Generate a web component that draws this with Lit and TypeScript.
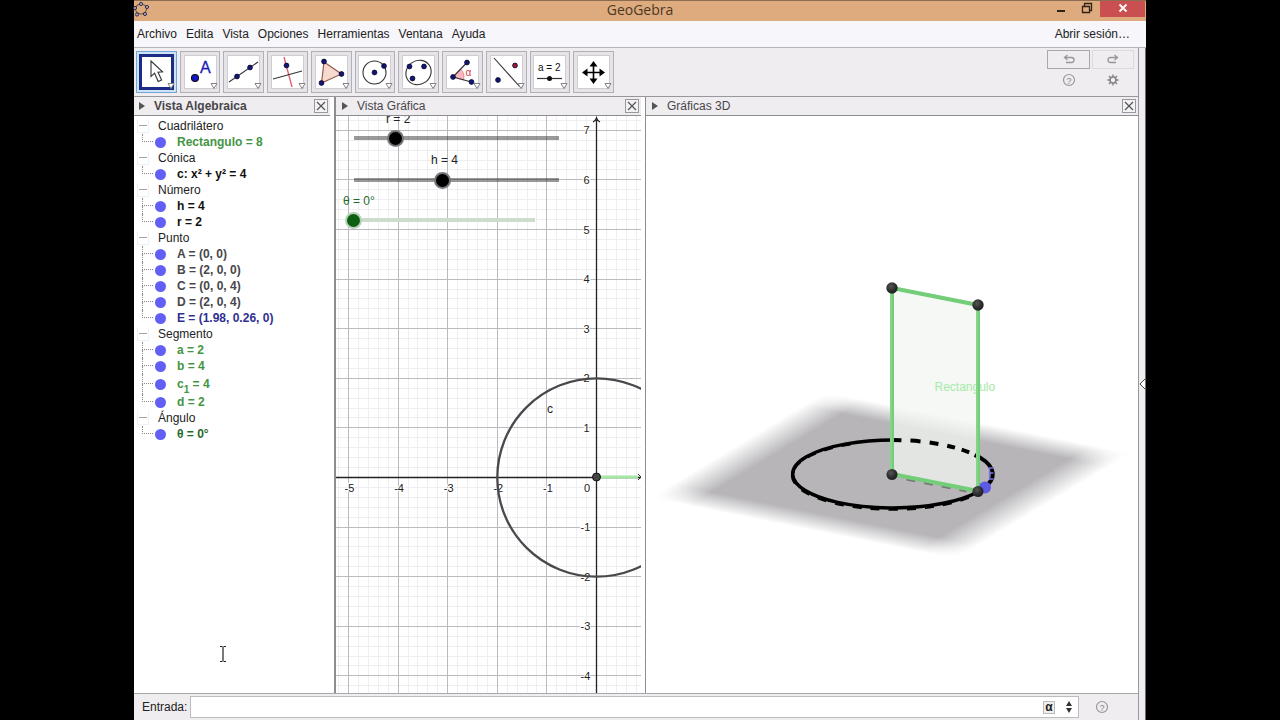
import { LitElement, html, svg, css } from "lit";
import { customElement, property } from "lit/decorators.js";

interface Item { text: string; sub?: string; rest?: string; tone: string; }
interface Group { name: string; items: Item[]; }

const GROUPS: Group[] = [
  { name: "Cuadrilátero", items: [{ text: "Rectangulo = 8", tone: "green" }] },
  { name: "Cónica", items: [{ text: "c: x² + y² = 4", tone: "black" }] },
  { name: "Número", items: [{ text: "h = 4", tone: "black" }, { text: "r = 2", tone: "black" }] },
  {
    name: "Punto",
    items: [
      { text: "A = (0, 0)", tone: "gray" },
      { text: "B = (2, 0, 0)", tone: "gray" },
      { text: "C = (0, 0, 4)", tone: "gray" },
      { text: "D = (2, 0, 4)", tone: "gray" },
      { text: "E = (1.98, 0.26, 0)", tone: "blue" },
    ],
  },
  {
    name: "Segmento",
    items: [
      { text: "a = 2", tone: "green" },
      { text: "b = 4", tone: "green" },
      { text: "c", sub: "1", rest: " = 4", tone: "green" },
      { text: "d = 2", tone: "green" },
    ],
  },
  { name: "Ángulo", items: [{ text: "θ = 0°", tone: "dark" }] },
];

const dot = (x: number, y: number, fill = "#16166e") =>
  svg`<circle cx=${x} cy=${y} r="2.400" fill=${fill} stroke="#000033" stroke-width=".8"/>`;

const TOOLS = [
  { label: "Elige y mueve", art: svg`<path d="M11 6V21.500L14.600 18.200L18.200 26.500L21.600 25L18 17.200L22.600 16.800Z" fill="#fff" stroke="#333" stroke-width="1.100"/>` },
  { label: "Punto", art: svg`<circle cx="11" cy="22" r="3.500" fill="#1414c8" stroke="#111" stroke-width="1.100"/><text x="16" y="17" font-size="16" fill="#1a1ab4" stroke="#1a1ab4" stroke-width=".3">A</text>` },
  { label: "Recta", art: svg`<path d="M2 26L31 6" stroke="#333" stroke-width="1.100"/>${dot(10, 20.5)}${dot(23, 11.5)}` },
  { label: "Perpendicular", art: svg`<path d="M13 1L21 31" stroke="#e05a68" stroke-width="1.300"/><path d="M2 23L31 15" stroke="#333" stroke-width="1.100"/>${dot(15.5, 9.5)}` },
  { label: "Polígono", art: svg`<path d="M9 6L26.500 18L6.500 27Z" fill="#f6d9cf" stroke="#9a5a48" stroke-width="1.200"/>${dot(9, 5.5)}${dot(26.5, 18)}${dot(6.5, 27)}` },
  { label: "Circunferencia", art: svg`<circle cx="16.500" cy="16.500" r="11.500" fill="none" stroke="#333" stroke-width="1.100"/>${dot(16.5, 16.5)}${dot(26, 10)}` },
  { label: "Elipse", art: svg`<ellipse cx="16.500" cy="16.500" rx="13" ry="11.800" transform="rotate(-35 16.500 16.500)" fill="none" stroke="#333" stroke-width="1.100"/>${dot(7.5, 10.5)}${dot(22, 10.5)}${dot(10.5, 22.5)}` },
  { label: "Ángulo", art: svg`<path d="M7 21L14.500 13A11 11 0 0 1 17.500 24Z" fill="#f9b8be" stroke="#e07884" stroke-width=".8"/><path d="M7 21L21 6.500M7 21L25.500 26" stroke="#333" stroke-width="1.100"/>${dot(7, 21)}${dot(21, 6.5)}${dot(25.5, 26)}<text x="19.500" y="19.500" font-size="10" fill="#d83c3c">α</text>` },
  { label: "Simetría", art: svg`<path d="M4 2L30 31" stroke="#333" stroke-width="1.100"/>${dot(8, 24)}${dot(25, 9.5, "#a01830")}` },
  { label: "Deslizador", art: svg`<text x="5" y="15" font-size="10" fill="#111">a = 2</text><path d="M4 22.500H29" stroke="#333" stroke-width="1.200"/><circle cx="16.500" cy="22.500" r="2.500" fill="#111"/>` },
  { label: "Desplaza vista", art: svg`<path d="M8 16.500H25M16.500 8V25" stroke="#000" stroke-width="1.600"/><path d="M16.500 5L20.500 10.500H12.500ZM16.500 28L20.500 22.500H12.500ZM5 16.500L10.500 12.500V20.500ZM28 16.500L22.500 12.500V20.500Z" fill="#000"/>` },
];

const base = css`
  * { box-sizing: border-box; }
  button { padding: 0; border: 0; background: none; font: inherit; color: inherit; }
  svg { display: block; }
`;

@customElement("view-header")
class ViewHeader extends LitElement {
  @property() label = "";
  @property({ type: Boolean }) active = false;

  static styles = [base, css`
    :host { display: block; background: #efedf0; border-bottom: 1px solid #8e8c90; }
    .bar { display: flex; align-items: center; height: 18px; padding: 0 2px 0 5px; color: #48464a; font-size: 12px; }
    .title { flex: 1; margin: 0 0 0 7px; font-size: 12px; font-weight: 400; }
    .strong { font-weight: 700; }
    .close { width: 14px; height: 14px; border: 1px solid #9a989c; background: #f3f2f4; }
  `];

  render() {
    return html`<div class="bar">
      <button aria-label="Estilo"><svg width="8" height="10"><path d="M0 1L6 5L0 9Z" fill="#555"/></svg></button>
      <h2 class="title ${this.active ? "strong" : ""}">${this.label}</h2>
      <button class="close" aria-label="Cerrar"><svg width="12" height="12"><path d="M2 2L10 10M10 2L2 10" stroke="#555" stroke-width="1.200"/></svg></button>
    </div>`;
  }
}

@customElement("algebra-view")
class AlgebraView extends LitElement {
  static styles = [base, css`
    :host { display: block; }
    .tree { padding: 2px 0 0 3px; font-size: 12px; line-height: 16px; }
    .head { display: flex; align-items: center; height: 16px; margin: 0; font-size: 12px; font-weight: 400; color: #222; }
    .toggle { width: 12px; height: 14px; margin-right: 9px; border: 1px solid #f0eff2; border-top: 0; }
    .minus { display: block; width: 8px; height: 1px; margin-left: 1px; background: #a5a3a8; }
    .list { list-style: none; margin: 0; padding: 0 0 0 5px; }
    .item { display: flex; align-items: center; height: 16px; font-weight: 700; }
    .tall { height: 20px; }
    .branch { display: grid; grid-template-rows: 1fr 1fr; align-self: stretch; width: 11px; }
    .upper { border-left: 1px dotted #8a888c; border-bottom: 1px dotted #8a888c; }
    .lower { border-left: 1px dotted #8a888c; }
    .item:last-child .lower { border-left: 0; }
    .mark { width: 11px; height: 11px; margin: 0 11px 0 2px; border-radius: 50%; background: #625ff6; }
    .sub { font-size: 10px; line-height: 1px; vertical-align: -5px; }
    .green { color: #439543; }
    .black { color: #111; }
    .gray { color: #48464a; }
    .blue { color: #302f93; }
    .dark { color: #1f6a2a; }
  `];

  render() {
    return html`<div class="tree">${GROUPS.map((g) => html`
      <h3 class="head"><button class="toggle" aria-label="Contraer ${g.name}"><span class="minus"></span></button>${g.name}</h3>
      <ul class="list">${g.items.map((i) => html`
        <li class="item ${i.sub ? "tall" : ""}">
          <span class="branch"><span class="upper"></span><span class="lower"></span></span>
          <button class="mark" aria-label="Mostrar u ocultar"></button>
          <span class=${i.tone}>${i.text}${i.sub ? html`<span class="sub">${i.sub}</span>${i.rest}` : ""}</span>
        </li>`)}
      </ul>`)}</div>`;
  }
}

@customElement("graph-view")
class GraphView extends LitElement {
  static styles = [base, css`
    :host { display: block; position: relative; overflow: hidden; margin-right: 4px; font-size: 12px; }
    .plot { position: absolute; inset: 0; width: 100%; height: 100%; }
    .num { font-size: 11px; fill: #222; text-anchor: middle; stroke: #fff; stroke-width: 2px; paint-order: stroke; }
    .slider { position: absolute; }
    .name { position: absolute; white-space: nowrap; line-height: 14px; color: #222; }
    .range {
      display: block; appearance: none; margin: 0; width: 219px; height: 18px;
      background: linear-gradient(#00000066, #00000066) center / calc(100% - 14px) 4px no-repeat;
    }
    .range::-webkit-slider-thumb {
      appearance: none; width: 17px; height: 17px; border-radius: 50%;
      background: #000; border: 2px solid #777578;
    }
    .theta .range { width: 197px; background-image: linear-gradient(#cddccd, #cddccd); }
    .theta .range::-webkit-slider-thumb { background: #0d5f12; border-color: #b9cfb9; }
    .theta .name { color: #1f6a2a; left: -2px; top: -17px; }
    .r { left: 11px; top: 13px; }
    .r .name { left: 39px; top: -17px; }
    .h { left: 11px; top: 55px; }
    .h .name { left: 84px; top: -18px; }
    .theta { left: 9px; top: 95px; }
  `];

  render() {
    const u = 49.6, ox = 260.5, oy = 361.5;
    const minor = [], major = [], labels = [];
    for (let i = -26; i <= 60; i++) {
      const p = i * u / 5;
      const list = i % 5 ? minor : major;
      const color = i % 5 ? "#efeef2" : "#bcbabe";
      list.push(svg`<path d="M${Math.round(ox + p - 0.5) + 0.5} 0V2000M0 ${Math.round(oy + p - 0.5) + 0.5}H2000" stroke=${color}/>`);
    }
    for (let i = 27; i < 40; i++) {
      const color = i % 5 ? "#efeef2" : "#bcbabe";
      (i % 5 ? minor : major).push(svg`<path d="M0 ${Math.round(oy - i * u / 5 - 0.5) + 0.5}H2000" stroke=${color}/>`);
    }
    for (let x = -5; x < 0; x++) labels.push(svg`<text class="num" x=${ox + x * u + 1} y=${oy + 14}>${x}</text>`);
    for (let y = -4; y <= 7; y++) if (y) labels.push(svg`<text class="num" x=${ox - (y < 0 ? 11 : 10)} y=${oy - y * u + 4}>${y}</text>`);
    return html`
      <svg class="plot" role="img" aria-label="Plano cartesiano">
        ${minor}${major}
        <path d="M0 361.500H400M260.500 4V2000M257 6Q259.500 5 260.500 2Q261.500 5 264 6" fill="none" stroke="#222" stroke-width="1.300"/>
        ${labels}
        <text class="num" x="251" y="375.500">0</text>
        <circle cx=${ox} cy=${oy} r=${2 * u} fill="none" stroke="#4a484b" stroke-width="2.300"/>
        <text x="211" y="297" font-size="12" fill="#222">c</text>
        <path d="M260 361H302" stroke="#a5e8a5" stroke-width="3"/>
        <path d="M302 358L305 361L302 364" fill="none" stroke="#333"/>
        <circle cx="260.500" cy="361" r="4" fill="#444" stroke="#111"/>
      </svg>
      <div class="slider r"><label class="name" for="r">r = 2</label><input class="range" id="r" type="range" min="0" max="10" value="2"></div>
      <div class="slider h"><label class="name" for="h">h = 4</label><input class="range" id="h" type="range" min="1" max="8" value="4"></div>
      <div class="slider theta"><label class="name" for="t">θ = 0°</label><input class="range" id="t" type="range" min="0" max="360" value="0"></div>`;
  }
}

@customElement("space-view")
class SpaceView extends LitElement {
  static styles = [base, css`
    :host { display: block; overflow: hidden; }
    .scene { width: 100%; height: 100%; }
  `];

  render() {
    return html`<svg class="scene" viewBox="646 116 491 577" role="img" aria-label="Vista 3D">
      <defs>
        <linearGradient id="fx"><stop offset="0" stop-color="#b7b5b8" stop-opacity="0"/><stop offset=".13" stop-color="#b7b5b8"/><stop offset=".87" stop-color="#b7b5b8"/><stop offset="1" stop-color="#b7b5b8" stop-opacity="0"/></linearGradient>
        <linearGradient id="fy" x2="0" y2="1"><stop offset="0" stop-color="#000"/><stop offset=".13" stop-color="#fff"/><stop offset=".87" stop-color="#fff"/><stop offset="1" stop-color="#000"/></linearGradient>
        <mask id="fade" maskUnits="userSpaceOnUse" x="0" y="0" width="100" height="100"><rect width="100" height="100" fill="url(#fy)"/></mask>
        <radialGradient id="ball" cx=".4" cy=".35"><stop offset="0" stop-color="#555"/><stop offset="1" stop-color="#262628"/></radialGradient>
      </defs>
      <g transform="matrix(3.060 .61 1.760 -1.060 649 498)"><rect width="100" height="100" fill="url(#fx)" mask="url(#fade)"/></g>
      <path d="M892 440A100 34 0 1 0 977 492" fill="none" stroke="#000" stroke-width="3.500"/>
      <path d="M792 475A100 34 0 0 0 977 493" fill="none" stroke="#000" stroke-width="3.500" stroke-dasharray="9 9"/>
      <path d="M850 444A100 34 0 0 0 792 475" fill="none" stroke="#000" stroke-width="3" stroke-dasharray="9 9"/>
      <path d="M974 454.500A100 34 0 0 1 987 485" fill="none" stroke="#000" stroke-width="4"/>
      <path d="M892 288L978 305V491L892 474Z" fill="#f1f5f1" fill-opacity=".75"/>
      <path d="M892 440A100 34 0 0 1 978 457" fill="none" stroke="#000" stroke-width="4" stroke-dasharray="9 9 10 9 9 9 8 7 8 6 12 0"/>
      <text x="934" y="391" font-size="12" fill="#a6eaa9">Rectangulo</text>
      <path d="M906 479L966 491" stroke="#777" stroke-width="3" stroke-dasharray="9 9"/>
      <path d="M891.500 474V288L977.500 305V491Z" fill="none" stroke="#74cd78" stroke-width="4"/>
      <path d="M890.500 472V290" stroke="#94dd96"/><path d="M976.500 489V307" stroke="#94dd96"/>
      <path d="M993 468H989V479H993M989 473H993" stroke="#7674ee" fill="none" stroke-width="1.300"/>
      <circle cx="984.500" cy="487.500" r="6" fill="#5c5ae6"/>
      <circle cx="891.500" cy="288" r="5.700" fill="url(#ball)"/>
      <circle cx="977.500" cy="305" r="5.700" fill="url(#ball)"/>
      <circle cx="891.500" cy="474.500" r="5.500" fill="url(#ball)"/>
      <circle cx="977.500" cy="491.500" r="5.500" fill="url(#ball)"/>
    </svg>`;
  }
}

@customElement("app-root")
class AppRoot extends LitElement {
  static styles = [base, css`
    :host {
      display: grid; grid-template-rows: auto auto minmax(0, 1fr); height: 100vh; padding: 0 134px;
      background: #000; font-family: "Liberation Sans", Arial, sans-serif; font-size: 12px; color: #222;
    }
    .titlebar { display: grid; grid-template-columns: 1fr auto 1fr; align-items: start; height: 21px; background: #deab7e; border-top: 1px solid #8c6c50; }
    .logo { margin-left: -1px; }
    .title { margin: 0; font: 400 14px/18px "Open Sans", "Noto Sans", sans-serif; color: #4c3826; }
    .window { display: flex; justify-content: flex-end; height: 16px; }
    .min, .max { width: 26px; }
    .quit { width: 45px; background: #c94f50; margin-right: 1px; }
    .window svg { margin: 0 auto 3px; }
    .menu { display: flex; align-items: center; gap: 9px; height: 27px; padding: 0 16px 0 3px; background: #f7f6fa; border-bottom: 1px solid #b5b3b8; }
    .login { margin-left: auto; color: inherit; text-decoration: none; }
    .body { display: grid; grid-template-columns: minmax(0, 1fr) 8px; min-height: 0; background: #efedf0; }
    .side { display: grid; align-items: center; justify-items: end; border-left: 1px solid #9a989c; border-right: 1px solid #6e6c70; }
    .main { display: grid; grid-template-rows: 48px minmax(0, 1fr) 26px; min-height: 0; }
    .toolbar { display: flex; justify-content: space-between; align-items: flex-start; padding: 2px 4px 0 2px; }
    .tools { display: grid; grid-template-columns: repeat(11, minmax(0, 1fr)); width: 478px; column-gap: 3px; margin-top: 1px; }
    .tool { position: relative; height: 42px; padding: 3px 2px; border: 1px solid #b2b0b4; background: #e6e4e8; }
    .art { width: 33px; height: 34px; margin: auto; background: #fff; border: 1px solid #cfcdd1; }
    .selected { border-color: #74a5d6; background: #cfe2f5; }
    .selected .art { width: 35px; height: 36px; margin: -1px 0; border: 3px solid #1c2b86; }
    .more { position: absolute; right: 1px; bottom: 2px; }
    .actions { display: grid; grid-template-columns: 43px 42px; column-gap: 2px; justify-items: center; }
    .undo, .redo { width: 100%; height: 19px; border: 1px solid #aaa8ac; }
    .redo { border-color: #dcdade; }
    .actions svg { margin: auto; }
    .small { height: 22px; }
    .views { display: grid; grid-template-columns: 200px 311px minmax(0, 1fr); min-height: 0; border-top: 1px solid #99979b; border-bottom: 1px solid #aaa8ac; background: #fff; }
    .view { display: grid; grid-template-rows: 19px minmax(0, 1fr); min-width: 0; min-height: 0; }
    .view + .view { border-left: 2px solid #8e8c90; }
    .view + .last { border-left-width: 1px; }
    .view + .view view-header { padding-left: 1px; }
    .algebra view-header, .graph view-header { margin-right: 4px; }
    .entry { display: flex; align-items: center; padding: 0 0 0 8px; }
    .field { display: flex; align-items: center; flex: 1; height: 22px; margin: 0 59px 0 3px; background: #fff; border: 1px solid #bdbbc0; }
    .input { flex: 1; min-width: 0; height: 18px; border: 0; outline: 0; background: none; font: inherit; }
    .alpha { width: 12px; height: 13px; border: 1px solid #bbb; background: #eee; font-weight: 700; line-height: 10px; }
    .history { margin: 0 5px 0 10px; }
    .entry .help { margin: 0 29px 0 -43px; }
    .beam { position: fixed; left: 218px; top: 645px; pointer-events: none; }
  `];

  private help() {
    return html`<svg width="14" height="14"><circle cx="7" cy="7" r="5.500" fill="none" stroke="#99979b" stroke-width="1.200"/><text x="7" y="10.500" font-size="9" text-anchor="middle" fill="#858387">?</text></svg>`;
  }

  render() {
    return html`
      <header class="titlebar">
        <svg class="logo" width="16" height="16"><ellipse cx="8" cy="8" rx="5.500" ry="5" fill="none" stroke="#6e5c54" stroke-width="1.200"/>${[[8, 3], [14, 6], [12, 13], [4, 13.5], [2, 7]].map(([x, y]) => svg`<circle cx=${x} cy=${y} r="1.600" fill="#a9a3bd" stroke="#33304a"/>`)}</svg>
        <h1 class="title">GeoGebra</h1>
        <div class="window">
          <button class="min" aria-label="Minimizar"><svg width="10" height="10"><path d="M1 8H9" stroke="#2e2118" stroke-width="2"/></svg></button>
          <button class="max" aria-label="Restaurar"><svg width="12" height="12"><path d="M1.500 4.500H8.500V10.500H1.500ZM3.500 4V1.500H10.500V8.500H9" fill="none" stroke="#2e2118" stroke-width="1.300"/></svg></button>
          <button class="quit" aria-label="Cerrar"><svg width="10" height="10"><path d="M1.500 1.500L8.500 8.500M8.500 1.500L1.500 8.500" stroke="#fff" stroke-width="1.800"/></svg></button>
        </div>
      </header>
      <nav class="menu">
        ${["Archivo", "Edita", "Vista", "Opciones", "Herramientas", "Ventana", "Ayuda"].map((m) => html`<button>${m}</button>`)}
        <a class="login" href="#">Abrir sesión…</a>
      </nav>
      <div class="body">
        <main class="main">
          <div class="toolbar">
            <div class="tools">${TOOLS.map((t, i) => html`
              <button class="tool ${i ? "" : "selected"}" aria-label=${t.label}>
                <svg class="art" viewBox=${i ? "1 0 31 32" : "2 2 29 30"}>${t.art}</svg>
                <svg class="more" width="8" height="8"><path d="M1 1.500H7L4 6.500Z" fill="#fff" stroke="#858387"/></svg>
              </button>`)}
            </div>
            <div class="actions">
              <button class="undo" aria-label="Deshacer"><svg width="14" height="12"><path d="M3 3.500H9.500Q12 3.500 12 6T9.500 8.500H4M5.500 1L2.500 3.500L5.500 6" fill="none" stroke="#98969a" stroke-width="1.300"/></svg></button>
              <button class="redo" aria-label="Rehacer"><svg width="14" height="12"><path d="M11 3.500H4.500Q2 3.500 2 6T4.500 8.500H10M8.500 1L11.500 3.500L8.500 6" fill="none" stroke="#98969a" stroke-width="1.300"/></svg></button>
              <button class="small" aria-label="Ayuda">${this.help()}</button>
              <button class="small" aria-label="Ajustes"><svg width="14" height="14"><circle cx="7" cy="7" r="3" fill="none" stroke="#858387" stroke-width="1.600"/><path d="M7 1.500V4M7 10V12.500M1.500 7H4M10 7H12.500M3 3L5 5M9 9L11 11M11 3L9 5M5 9L3 11" stroke="#858387" stroke-width="1.400"/></svg></button>
            </div>
          </div>
          <div class="views">
            <section class="view algebra"><view-header label="Vista Algebraica" active></view-header><algebra-view></algebra-view></section>
            <section class="view graph"><view-header label="Vista Gráfica"></view-header><graph-view></graph-view></section>
            <section class="view last"><view-header label="Gráficas 3D"></view-header><space-view></space-view></section>
          </div>
          <form class="entry">
            <label for="entry">Entrada:</label>
            <div class="field">
              <input class="input" id="entry" type="text">
              <button class="alpha" type="button" aria-label="Símbolos">α</button>
              <button class="history" type="button" aria-label="Historial"><svg width="8" height="12"><path d="M4 0L7 5H1ZM4 12L7 7H1Z" fill="#333"/></svg></button>
            </div>
            <button class="help" type="button" aria-label="Ayuda de entrada">${this.help()}</button>
          </form>
        </main>
        <aside class="side"><button aria-label="Mostrar barra lateral"><svg width="6" height="12"><path d="M6 1L1 6L6 11" fill="#fff" stroke="#444"/></svg></button></aside>
      </div>
      <svg class="beam" width="10" height="18"><path d="M2 1.500H4.500M5.500 1.500H8M5 2V16M2 16.500H4.500M5.500 16.500H8" stroke="#222" stroke-width="1.200"/></svg>
    `;
  }
}
